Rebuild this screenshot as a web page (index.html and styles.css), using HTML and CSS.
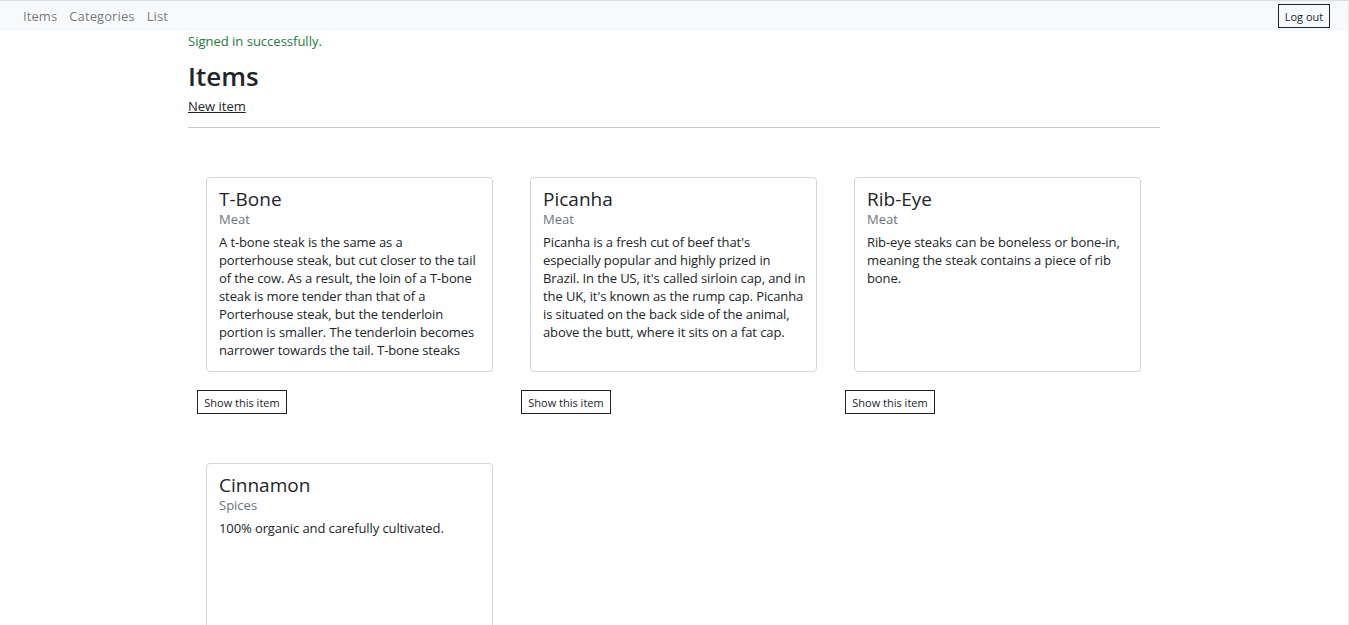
FILE: index.html
```html
<!DOCTYPE html>
<html lang="en">
<head>
<meta charset="utf-8">
<title>Items</title>
<link rel="stylesheet" href="styles.css">
</head>
<body>
<div class="page">
  <nav class="navbar">
    <div class="nav-links">
      <a href="#" class="nav-link">Items</a>
      <a href="#" class="nav-link">Categories</a>
      <a href="#" class="nav-link">List</a>
    </div>
    <button class="btn-outline logout">Log out</button>
  </nav>
  <main class="container">
    <p class="notice">Signed in successfully.</p>
    <h1 class="title">Items</h1>
    <a href="#" class="new-link">New item</a>
    <hr class="divider">
    <div class="items-grid">
      <div class="item-col">
        <div class="card">
          <h5 class="card-title">T-Bone</h5>
          <h6 class="card-subtitle">Meat</h6>
          <p class="card-text">A t-bone steak is the same as a<br>porterhouse steak, but cut closer to the tail<br>of the cow. As a result, the loin of a T-bone<br>steak is more tender than that of a<br>Porterhouse steak, but the tenderloin<br>portion is smaller. The tenderloin becomes<br>narrower towards the tail. T-bone steaks</p>
        </div>
        <button class="btn-outline show-btn">Show this item</button>
      </div>
      <div class="item-col">
        <div class="card">
          <h5 class="card-title">Picanha</h5>
          <h6 class="card-subtitle">Meat</h6>
          <p class="card-text">Picanha is a fresh cut of beef that's<br>especially popular and highly prized in<br>Brazil. In the US, it's called sirloin cap, and in<br>the UK, it's known as the rump cap. Picanha<br>is situated on the back side of the animal,<br>above the butt, where it sits on a fat cap.</p>
        </div>
        <button class="btn-outline show-btn">Show this item</button>
      </div>
      <div class="item-col">
        <div class="card">
          <h5 class="card-title">Rib-Eye</h5>
          <h6 class="card-subtitle">Meat</h6>
          <p class="card-text">Rib-eye steaks can be boneless or bone-in,<br>meaning the steak contains a piece of rib<br>bone.</p>
        </div>
        <button class="btn-outline show-btn">Show this item</button>
      </div>
      <div class="item-col">
        <div class="card">
          <h5 class="card-title">Cinnamon</h5>
          <h6 class="card-subtitle">Spices</h6>
          <p class="card-text">100% organic and carefully cultivated.</p>
        </div>
        <button class="btn-outline show-btn">Show this item</button>
      </div>
    </div>
  </main>
</div>
</body>
</html>
```
FILE: styles.css
```css
* { box-sizing: border-box; }
html, body { margin: 0; padding: 0; }
body {
  font-family: "Open Sans", "Noto Sans", sans-serif;
  font-size: 13px;
  color: #212529;
  background: #fff;
}
.page {
  min-height: 100vh;
  border-top: 1px solid #dcdcdc;
  border-right: 1px solid #e6e6e6;
}
.navbar {
  height: 30px;
  background: #f8f9fa;
  display: flex;
  align-items: center;
  justify-content: space-between;
  padding: 0 18px 0 23px;
}
.nav-links { display: flex; gap: 12px; }
.nav-link {
  color: rgba(0,0,0,0.55);
  text-decoration: none;
  font-size: 13px;
  letter-spacing: 0.1px;
}
.btn-outline {
  font-family: inherit;
  background: #fff;
  border: 1px solid #212529;
  border-radius: 0;
  color: #212529;
  font-size: 11px;
  padding: 0 6px;
  height: 24px;
  cursor: pointer;
}
.logout { width: 52px; padding: 0; background: transparent; }
.container {
  width: 972px;
  margin: 0 auto;
}
.notice {
  margin: 0;
  line-height: 20px;
  color: #1c7c3a;
}
.title {
  margin: 8px 0 0;
  font-size: 26px;
  line-height: 34px;
  font-weight: 600;
}
.new-link {
  display: inline-block;
  margin-top: 3px;
  line-height: 20px;
  color: #212529;
}
.divider {
  margin: 11px 0 0;
  border: 0;
  border-top: 1px solid #c8c8c8;
}
.items-grid {
  display: grid;
  grid-template-columns: repeat(3, 1fr);
}
.item-col {
  padding: 49px 8px 0 9px;
}
.card {
  width: 287px;
  height: 195px;
  margin-left: 9px;
  border: 1px solid #d6d6d6;
  border-radius: 4px;
  padding: 11px 12px;
  overflow: hidden;
}
.card-title {
  margin: 0;
  font-size: 19px;
  line-height: 21px;
  font-weight: 400;
}
.card-subtitle {
  margin: 0 0 5px;
  font-size: 13px;
  line-height: 18px;
  font-weight: 400;
  color: #6c757d;
}
.card-text {
  margin: 0;
  line-height: 18px;
  white-space: nowrap;
  letter-spacing: -0.1px;
}
.show-btn {
  margin-top: 18px;
  width: 90px;
  padding: 0;
}
```
